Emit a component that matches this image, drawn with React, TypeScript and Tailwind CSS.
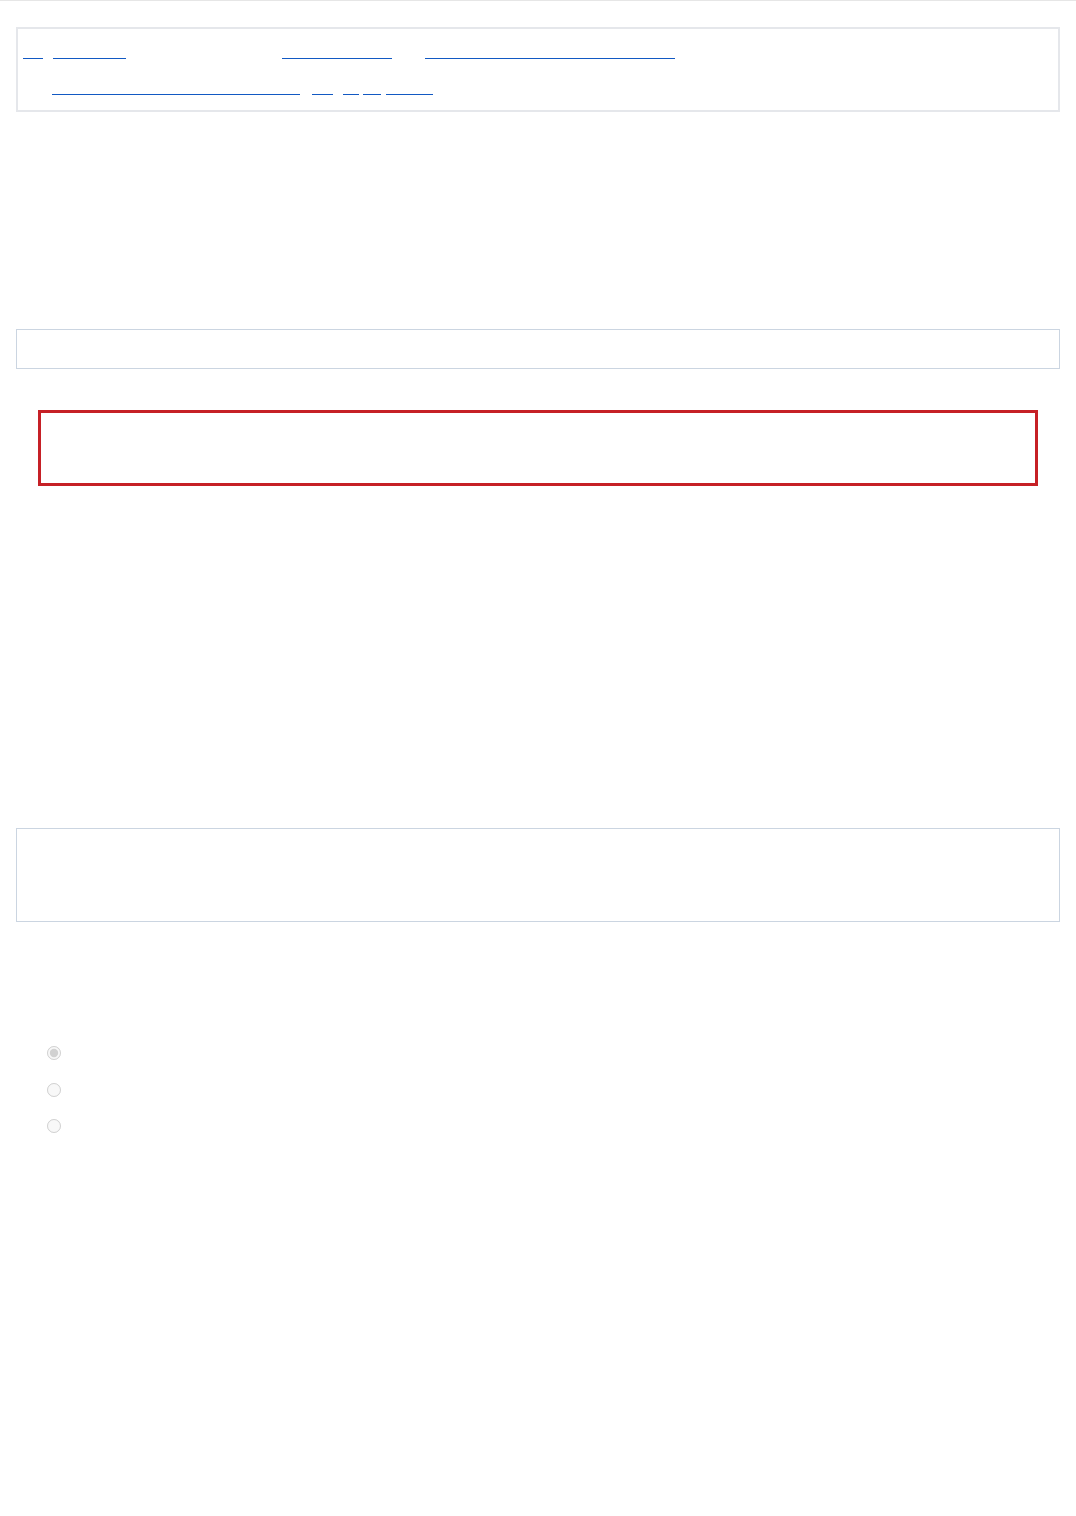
import React from 'react';

// Text on this page is rendered transparent; only link underlines, borders and radios show.
type Item = { text: string; w: string; link?: boolean };

const rowOne: Item[] = [
  { text: 'Go', w: 'w-[20px]', link: true },
  { text: ' ', w: 'w-[10px]' },
  { text: 'Start', w: 'w-[73px]', link: true },
  { text: 'Skip to content', w: 'w-[156px]' },
  { text: 'Accessibility', w: 'w-[110px]', link: true },
  { text: 'or', w: 'w-[33px]' },
  { text: 'Keyboard shortcuts', w: 'w-[250px]', link: true },
];

const rowTwo: Item[] = [
  { text: 'See', w: 'w-[29px]' },
  { text: 'Accessibility statement', w: 'w-[248px]', link: true },
  { text: ',', w: 'w-[12px]' },
  { text: 'EN', w: 'w-[21px]', link: true },
  { text: ' ', w: 'w-[10px]' },
  { text: 'F', w: 'w-[16px]', link: true },
  { text: ' ', w: 'w-[4px]' },
  { text: 'D', w: 'w-[18px]', link: true },
  { text: ' ', w: 'w-[5px]' },
  { text: 'More', w: 'w-[47px]', link: true },
];

function Row({ items }: { items: Item[] }) {
  return (
    <div className="flex h-9">
      {items.map((item, i) =>
        item.link ? (
          <a
            key={i}
            href="#"
            className={`${item.w} h-[26px] shrink-0 whitespace-nowrap border-b border-[#1259c3] leading-[26px] text-transparent`}
          >
            {item.text}
          </a>
        ) : (
          <span key={i} className={`${item.w} h-[26px] shrink-0 whitespace-nowrap leading-[26px] text-transparent`}>
            {item.text}
          </span>
        )
      )}
    </div>
  );
}

const options = ['Standard view', 'Compact view', 'Text only'];

export default function App() {
  return (
    <div className="min-h-[1516px] border-t border-[#e6e6e6] bg-white font-['Liberation_Sans',Arial,sans-serif] text-[16px] text-transparent">
      <div className="px-4 pt-[26px]">
        {/* Skip links */}
        <nav className="border-2 border-[#e5e7eb] pt-1 pb-[5px] pl-[5px]">
          <Row items={rowOne} />
          <Row items={rowTwo} />
        </nav>

        {/* Search bar */}
        <div className="mt-[217px] flex h-10 items-center border border-[#cbd5e1] px-3">
          <span className="text-transparent">Search</span>
        </div>

        {/* Alert */}
        <div className="mx-[22px] mt-[41px] flex h-[76px] items-center border-[3px] border-[#c62026] px-4">
          <p className="text-transparent">An error occurred while loading this page.</p>
        </div>

        {/* Info panel */}
        <div className="mt-[342px] h-[94px] border border-[#cbd5e1] p-4">
          <p className="text-transparent">Display settings</p>
        </div>

        {/* Options */}
        <fieldset className="mt-[113px] pl-[31px]">
          {options.map((label, i) => (
            <label key={label} className="flex h-[36.5px] items-center gap-2">
              <input type="radio" name="view" disabled defaultChecked={i === 0} className="m-0 h-[14px] w-[14px]" />
              <span className="text-transparent">{label}</span>
            </label>
          ))}
        </fieldset>
      </div>
    </div>
  );
}
